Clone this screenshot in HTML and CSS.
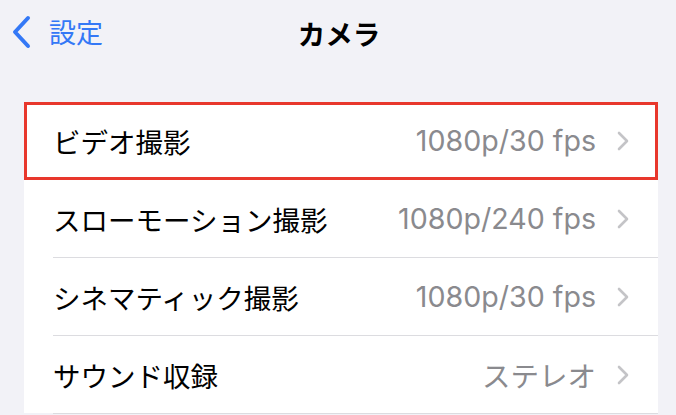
FILE: index.html
```html
<!DOCTYPE html>
<html lang="ja">
<head>
<meta charset="utf-8">
<link rel="stylesheet" href="styles.css">
</head>
<body>
<div class="screen">
  <header class="nav">
    <div class="back">
      <svg class="back-icon" width="20" height="34" viewBox="0 0 20 34"><path d="M17 3 L4 17 L17 31" fill="none" stroke="#3478f6" stroke-width="4" stroke-linecap="round" stroke-linejoin="round"/></svg>
      <span class="back-label">設定</span>
    </div>
    <div class="title">カメラ</div>
  </header>
  <div class="card">
    <div class="row highlighted">
      <span class="label">ビデオ撮影</span>
      <span class="value">1080p/30 fps</span>
      <svg class="chev" width="14" height="22" viewBox="0 0 14 22"><path d="M3 3 L11 11 L3 19" fill="none" stroke="#c4c4c7" stroke-width="2.6" stroke-linecap="round" stroke-linejoin="round"/></svg>
    </div>
    <div class="row">
      <span class="label">スローモーション撮影</span>
      <span class="value">1080p/240 fps</span>
      <svg class="chev" width="14" height="22" viewBox="0 0 14 22"><path d="M3 3 L11 11 L3 19" fill="none" stroke="#c4c4c7" stroke-width="2.6" stroke-linecap="round" stroke-linejoin="round"/></svg>
    </div>
    <div class="row">
      <span class="label">シネマティック撮影</span>
      <span class="value">1080p/30 fps</span>
      <svg class="chev" width="14" height="22" viewBox="0 0 14 22"><path d="M3 3 L11 11 L3 19" fill="none" stroke="#c4c4c7" stroke-width="2.6" stroke-linecap="round" stroke-linejoin="round"/></svg>
    </div>
    <div class="row">
      <span class="label">サウンド収録</span>
      <span class="value jp">ステレオ</span>
      <svg class="chev" width="14" height="22" viewBox="0 0 14 22"><path d="M3 3 L11 11 L3 19" fill="none" stroke="#c4c4c7" stroke-width="2.6" stroke-linecap="round" stroke-linejoin="round"/></svg>
    </div>
  </div>
</div>
</body>
</html>
```
FILE: styles.css
```css
html, body {
  margin: 0;
  padding: 0;
  background: #f2f2f7;
}
.screen {
  width: 676px;
  height: 415px;
  overflow: hidden;
  background: #f2f2f7;
  font-family: "Inter", "Noto Sans CJK JP", sans-serif;
}
.nav {
  position: relative;
  height: 66px;
  display: flex;
  align-items: center;
  justify-content: center;
}
.back {
  position: absolute;
  left: 11px;
  top: 15px;
  display: flex;
  align-items: center;
  gap: 18px;
}
.back-icon {
  display: block;
}
.back-label {
  font-family: "Noto Sans CJK JP", sans-serif;
  font-size: 27px;
  color: #3478f6;
  line-height: 34px;
}
.title {
  font-family: "Noto Sans CJK JP", sans-serif;
  font-size: 27.5px;
  font-weight: 700;
  color: #000;
  line-height: 34px;
  padding-left: 2px;
}
.card {
  margin: 36px 18px 0 24px;
  background: #fff;
}
.row {
  position: relative;
  height: 77px;
  display: flex;
  align-items: center;
  padding: 0 28px 0 29px;
}
.row::after {
  content: "";
  position: absolute;
  left: 29px;
  right: 0;
  bottom: -1px;
  height: 1px;
  background: #dcdce0;
}
.row + .row {
  margin-top: 1px;
}
.label {
  flex: 1;
  font-family: "Noto Sans CJK JP", sans-serif;
  font-size: 27.5px;
  color: #000;
}
.value {
  font-size: 28.6px;
  color: #8a8a8e;
  margin-right: 20px;
}
.value.jp {
  font-family: "Noto Sans CJK JP", sans-serif;
  font-size: 28.5px;
}
.value, .label {
  line-height: 34px;
}
.chev {
  display: block;
}
.highlighted::before {
  content: "";
  position: absolute;
  left: 0;
  right: 0;
  top: 0;
  bottom: -1px;
  border: 3px solid #e8372c;
  z-index: 2;
}
```
